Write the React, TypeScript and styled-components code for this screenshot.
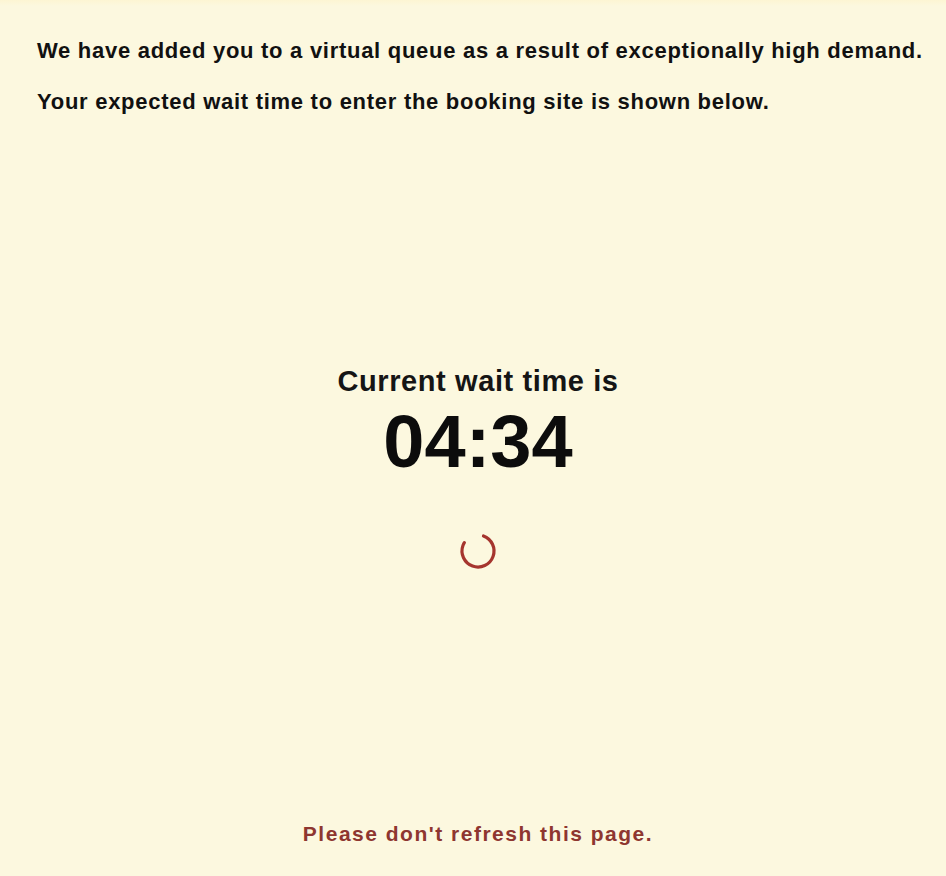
import React from "react";
import styled, { createGlobalStyle } from "styled-components";

const Global = createGlobalStyle`
  html, body { margin: 0; padding: 0; background: #fcf8df; }
  body { font-family: "Liberation Sans", Arial, sans-serif; }
`;

const Page = styled.div`
  width: 946px;
  height: 876px;
  box-sizing: border-box;
  display: flex;
  flex-direction: column;
  background: linear-gradient(#fdf5d3 0px, #fcf8df 6px);
  color: #111;
`;

const Intro = styled.div`
  padding: 39px 0 0 37px;
  display: flex;
  flex-direction: column;
  gap: 27px;
`;

const IntroLine = styled.p`
  margin: 0;
  font-size: 22px;
  font-weight: 700;
  line-height: 24px;
  letter-spacing: 0.72px;
  color: #111;
`;

const Center = styled.div`
  display: flex;
  flex-direction: column;
  align-items: center;
  margin-top: 251px;
  padding-left: 10px;
`;

const Label = styled.div`
  font-family: "Liberation Sans", Arial, sans-serif;
  font-size: 29px;
  font-weight: 700;
  line-height: 32px;
  letter-spacing: 0.6px;
  color: #151515;
`;

const Timer = styled.div`
  font-family: "Liberation Sans", Arial, sans-serif;
  font-size: 74px;
  font-weight: 700;
  line-height: 80px;
  margin-top: 5px;
  color: #0c0c0c;
`;

const SpinnerWrap = styled.div`
  margin-top: 49px;
  width: 40px;
  height: 40px;
  display: flex;
`;

const Footer = styled.div`
  margin-top: auto;
  padding-bottom: 30px;
  padding-left: 10px;
  text-align: center;
  font-family: "Liberation Sans", Arial, sans-serif;
  font-size: 21px;
  font-weight: 700;
  letter-spacing: 1.5px;
  color: #8e3630;
`;

function Spinner() {
  const r = 16;
  const c = 2 * Math.PI * r;
  const arc = c * (280 / 360);
  return (
    <svg width="40" height="40" viewBox="0 0 40 40">
      <circle
        cx="20"
        cy="20"
        r={r}
        fill="none"
        stroke="#a5352e"
        strokeWidth="3.2"
        strokeLinecap="round"
        strokeDasharray={`${arc} ${c}`}
        transform="rotate(-70 20 20)"
      />
    </svg>
  );
}

export default function App() {
  return (
    <Page>
      <Global />
      <Intro>
        <IntroLine>We have added you to a virtual queue as a result of exceptionally high demand.</IntroLine>
        <IntroLine>Your expected wait time to enter the booking site is shown below.</IntroLine>
      </Intro>
      <Center>
        <Label>Current wait time is</Label>
        <Timer>04:34</Timer>
        <SpinnerWrap>
          <Spinner />
        </SpinnerWrap>
      </Center>
      <Footer>Please don't refresh this page.</Footer>
    </Page>
  );
}
